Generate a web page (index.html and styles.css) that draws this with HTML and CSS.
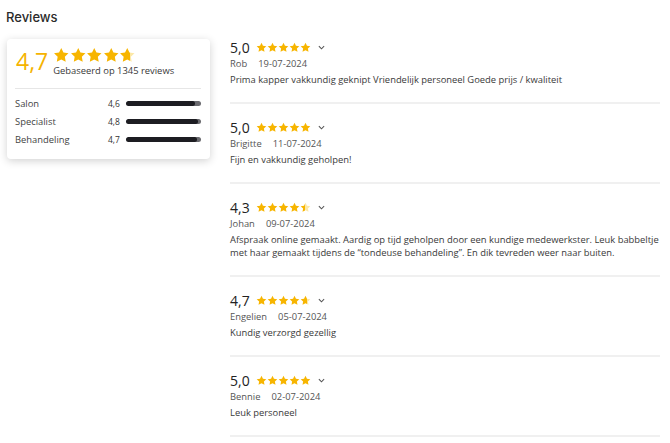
FILE: index.html
```html
<!DOCTYPE html>
<html>
<head>
<meta charset="utf-8">
<link rel="stylesheet" href="styles.css">
</head>
<body>
<svg width="0" height="0" class="defs">
  <defs>
    <symbol id="star" viewBox="0 0 24 24"><path d="M12 1.5l3.2 6.6 7.3 1-5.3 5.1 1.3 7.2L12 18l-6.5 3.4 1.3-7.2L1.5 9.1l7.3-1z"/></symbol>
    <linearGradient id="g70"><stop offset="70%" stop-color="#f7b500"/><stop offset="70%" stop-color="#fce8a6"/></linearGradient>
    <linearGradient id="g30"><stop offset="40%" stop-color="#f7b500"/><stop offset="40%" stop-color="#fce8a6"/></linearGradient>
  </defs>
</svg>
<h1 class="title">Reviews</h1>
<div class="layout">
  <aside class="summary">
    <div class="summary-top">
      <div class="big">4,7</div>
      <div class="summary-info">
        <div class="stars stars-lg">
          <svg><use href="#star"/></svg><svg><use href="#star"/></svg><svg><use href="#star"/></svg><svg><use href="#star"/></svg><svg fill="url(#g70)"><use href="#star"/></svg>
        </div>
        <div class="based">Gebaseerd op 1345 reviews</div>
      </div>
    </div>
    <div class="cats">
      <div class="cat"><span class="cat-label">Salon</span><span class="cat-val">4,6</span><span class="bar"><span class="fill" style="width:92%"></span></span></div>
      <div class="cat"><span class="cat-label">Specialist</span><span class="cat-val">4,8</span><span class="bar"><span class="fill" style="width:96%"></span></span></div>
      <div class="cat"><span class="cat-label">Behandeling</span><span class="cat-val">4,7</span><span class="bar"><span class="fill" style="width:94%"></span></span></div>
    </div>
  </aside>
  <main class="reviews">
    <article class="review">
      <div class="rating"><span class="score">5,0</span><span class="stars stars-sm"><svg><use href="#star"/></svg><svg><use href="#star"/></svg><svg><use href="#star"/></svg><svg><use href="#star"/></svg><svg><use href="#star"/></svg></span><svg class="chev" viewBox="0 0 8 5"><path d="M1 1l3 3 3-3"/></svg></div>
      <div class="meta"><span>Rob</span><span>19-07-2024</span></div>
      <p class="text">Prima kapper vakkundig geknipt Vriendelijk personeel Goede prijs / kwaliteit</p>
    </article>
    <article class="review">
      <div class="rating"><span class="score">5,0</span><span class="stars stars-sm"><svg><use href="#star"/></svg><svg><use href="#star"/></svg><svg><use href="#star"/></svg><svg><use href="#star"/></svg><svg><use href="#star"/></svg></span><svg class="chev" viewBox="0 0 8 5"><path d="M1 1l3 3 3-3"/></svg></div>
      <div class="meta"><span>Brigitte</span><span>11-07-2024</span></div>
      <p class="text">Fijn en vakkundig geholpen!</p>
    </article>
    <article class="review">
      <div class="rating"><span class="score">4,3</span><span class="stars stars-sm"><svg><use href="#star"/></svg><svg><use href="#star"/></svg><svg><use href="#star"/></svg><svg><use href="#star"/></svg><svg fill="url(#g30)"><use href="#star"/></svg></span><svg class="chev" viewBox="0 0 8 5"><path d="M1 1l3 3 3-3"/></svg></div>
      <div class="meta"><span>Johan</span><span>09-07-2024</span></div>
      <p class="text">Afspraak online gemaakt. Aardig op tijd geholpen door een kundige medewerkster. Leuk babbeltje met haar gemaakt tijdens de “tondeuse behandeling”. En dik tevreden weer naar buiten.</p>
    </article>
    <article class="review">
      <div class="rating"><span class="score">4,7</span><span class="stars stars-sm"><svg><use href="#star"/></svg><svg><use href="#star"/></svg><svg><use href="#star"/></svg><svg><use href="#star"/></svg><svg fill="url(#g70)"><use href="#star"/></svg></span><svg class="chev" viewBox="0 0 8 5"><path d="M1 1l3 3 3-3"/></svg></div>
      <div class="meta"><span>Engelien</span><span>05-07-2024</span></div>
      <p class="text">Kundig verzorgd gezellig</p>
    </article>
    <article class="review">
      <div class="rating"><span class="score">5,0</span><span class="stars stars-sm"><svg><use href="#star"/></svg><svg><use href="#star"/></svg><svg><use href="#star"/></svg><svg><use href="#star"/></svg><svg><use href="#star"/></svg></span><svg class="chev" viewBox="0 0 8 5"><path d="M1 1l3 3 3-3"/></svg></div>
      <div class="meta"><span>Bennie</span><span>02-07-2024</span></div>
      <p class="text">Leuk personeel</p>
    </article>
  </main>
</div>
</body>
</html>
```
FILE: styles.css
```css
* { box-sizing: border-box; }
html, body { margin: 0; padding: 0; background: #fff; }
body {
  font-family: "Open Sans", "Liberation Sans", sans-serif;
  color: #333;
  padding: 0 10px 0 6px;
  overflow: hidden;
}
.defs { position: absolute; width: 0; height: 0; }
.title {
  font-family: Inter, "Liberation Sans", sans-serif;
  font-size: 13px;
  font-weight: 500;
  color: #2b2b2b;
  margin: 0;
  padding-top: 8px;
  line-height: 18px;
}
.layout {
  display: flex;
  align-items: flex-start;
  gap: 20px;
  margin-top: 13px;
}
.summary {
  width: 203px;
  flex: none;
  margin-left: 1px;
  background: #fff;
  border-radius: 4px;
  box-shadow: 0 2px 8px rgba(0,0,0,0.18);
  padding: 6px 9px 12px 8px;
}
.summary-top {
  display: flex;
  align-items: center;
  gap: 5px;
  padding-bottom: 10px;
  border-bottom: 1px solid #e6e6e6;
}
.big {
  font-size: 23px;
  font-weight: 400;
  color: #f5b301;
  line-height: 31px;
  padding-left: 1px;
}
.summary-info { display: flex; flex-direction: column; padding-top: 2px; }
.stars { display: inline-flex; fill: #f7b500; }
.stars-lg svg { width: 16.5px; height: 16.5px; }
.stars-sm svg { width: 11px; height: 11px; }
.based { font-size: 9.4px; color: #3a3a3a; line-height: 14px; }
.cats { padding-top: 8px; display: flex; flex-direction: column; gap: 4px; }
.cat { display: flex; align-items: center; height: 14px; }
.cat-label { font-size: 9.4px; color: #444; flex: 1; }
.cat-val { font-size: 8.5px; color: #333; width: 18px; }
.bar {
  width: 75px; height: 5px; border-radius: 3px;
  background: #6b6b70; overflow: hidden; display: block;
}
.fill { display: block; height: 100%; background: #1d1d22; border-radius: 3px; }
.reviews { flex: 1; display: flex; flex-direction: column; margin-top: -2px; }
.review {
  padding: 0 0 15.5px;
  border-bottom: 2px solid #f0f0f0;
  margin-bottom: 13.5px;
}
.rating { display: flex; align-items: center; height: 20px; }
.score { font-size: 14px; color: #222; width: 26px; }
.stars-sm { gap: 0; }
.chev { width: 7px; height: 5px; margin-left: 7px; fill: none; stroke: #555; stroke-width: 1.2; }
.meta { font-size: 9.4px; color: #555; line-height: 13px; display: flex; gap: 11px; }
.text { font-size: 9.4px; color: #3a3a3a; line-height: 13px; margin: 3px 0 0; }
```
